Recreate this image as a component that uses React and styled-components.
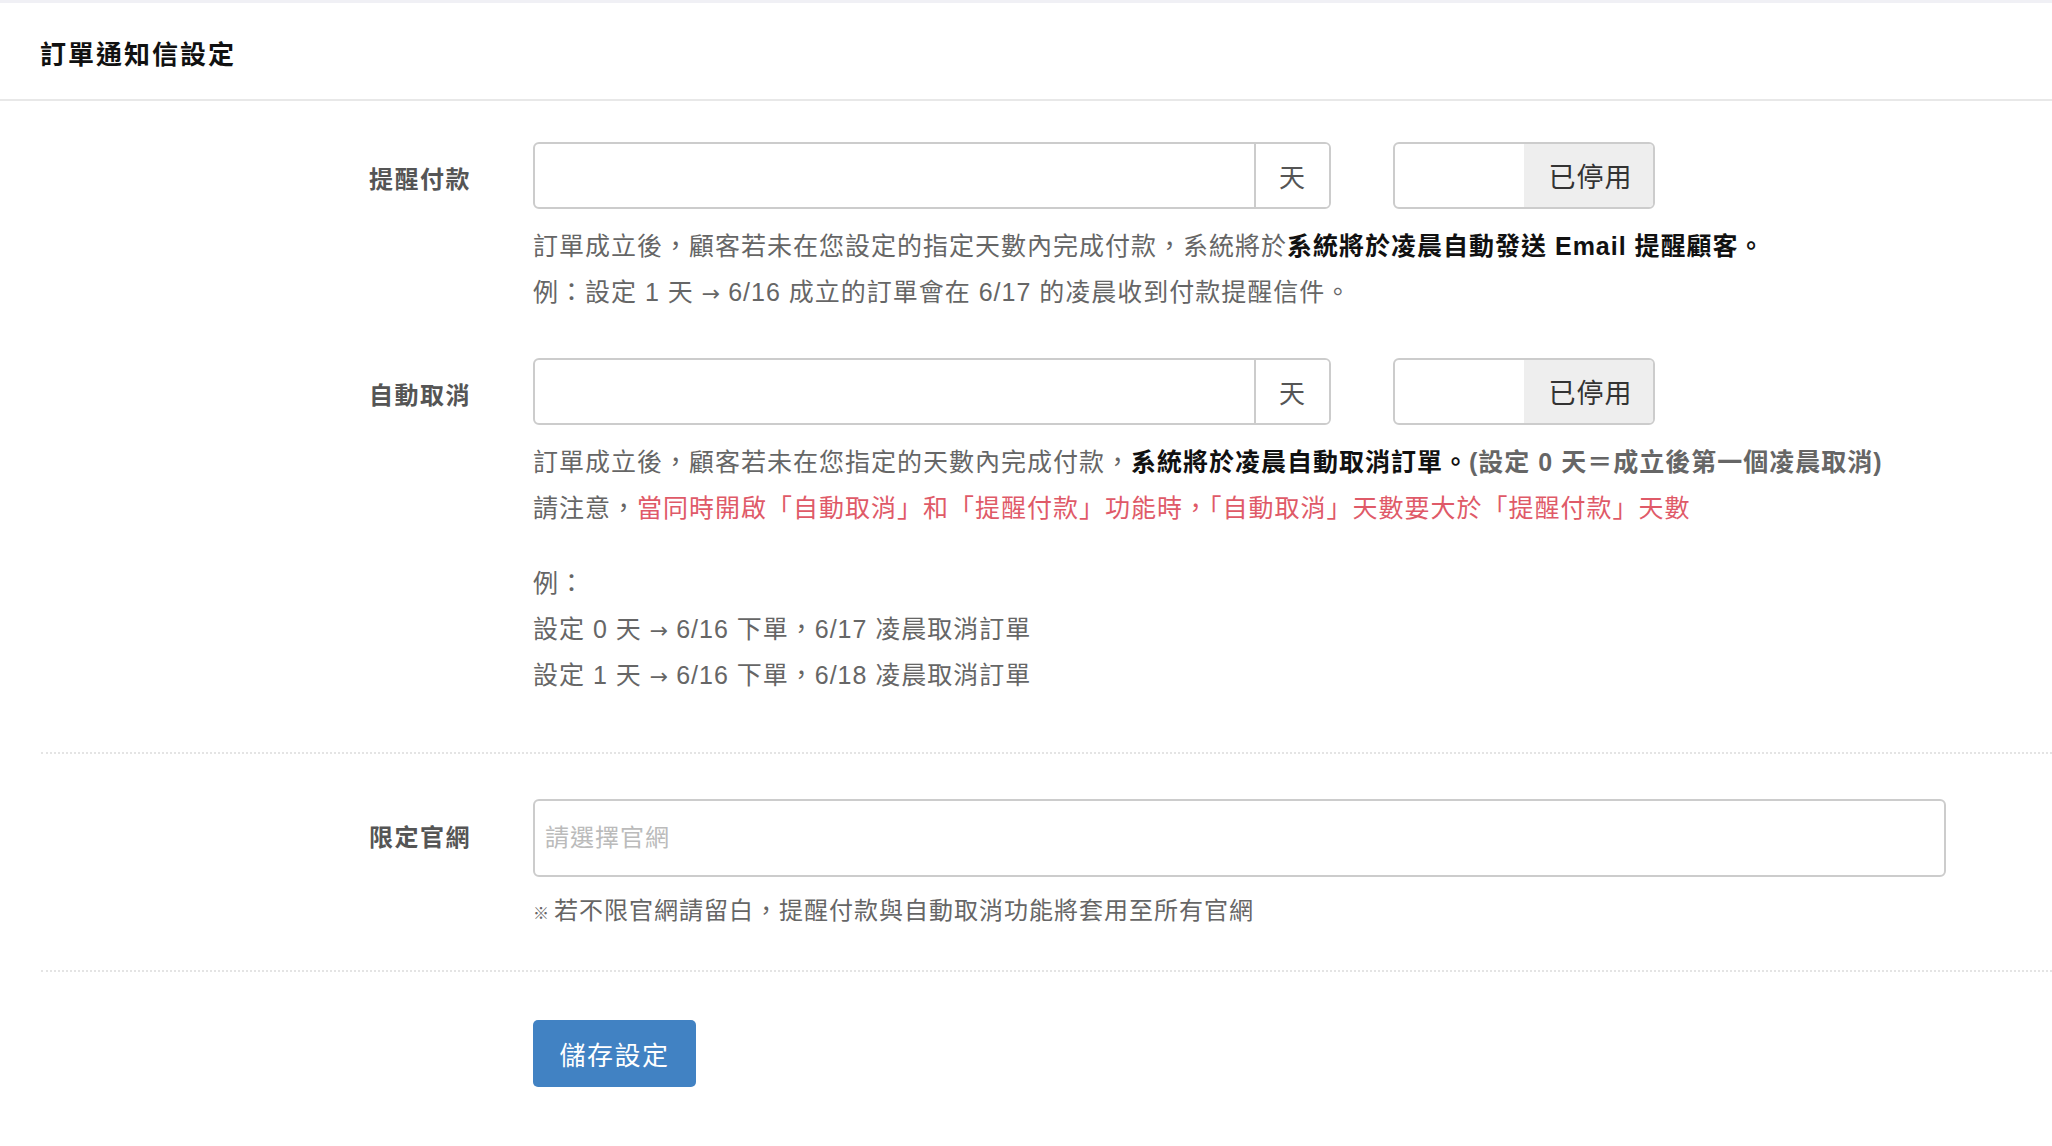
import React from 'react';
import styled, { createGlobalStyle } from 'styled-components';

const GlobalStyle = createGlobalStyle`
  body {
    margin: 0;
    background: #fff;
    font-family: "Liberation Sans", "Noto Sans CJK TC", sans-serif;
    color: #666;
  }
`;

const Page = styled.div`
  min-height: 1146px;
  background: #fff;
`;

const TopStrip = styled.div`
  height: 3px;
  background: #f0f0f5;
`;

const Header = styled.header`
  height: 98px;
  display: flex;
  align-items: center;
  padding: 2px 0 0 40px;
  box-sizing: border-box;
  border-bottom: 2px solid #e8e8e8;
`;

const Title = styled.h1`
  margin: 0;
  font-size: 26px;
  letter-spacing: 2px;
  font-weight: 700;
  color: #111;
`;

const Form = styled.form`
  margin-left: 41px;
  padding-top: 41px;
`;

const FieldRow = styled.div`
  display: grid;
  grid-template-columns: 430px auto;
  column-gap: 62px;
  align-items: start;
  margin-top: ${(p) => p.$top || 0}px;
`;

const Label = styled.div`
  height: ${(p) => p.$h || 67}px;
  padding-top: ${(p) => p.$pad ?? 4}px;
  box-sizing: border-box;
  display: flex;
  align-items: center;
  justify-content: flex-end;
  font-size: 24px;
  letter-spacing: 1.5px;
  font-weight: 700;
  color: #555;
`;

const Controls = styled.div`
  display: flex;
  gap: 62px;
`;

const InputGroup = styled.div`
  display: flex;
  width: ${(p) => p.$w}px;
  height: 67px;
  box-sizing: border-box;
  border: 2px solid #ccc;
  border-radius: 6px;
  overflow: hidden;
  background: #fff;
`;

const Field = styled.input`
  flex: 1;
  min-width: 0;
  border: none;
  outline: none;
  padding: 0 14px;
  font: inherit;
  font-size: 24px;
  background: transparent;
`;

const Addon = styled.span`
  width: ${(p) => p.$w}px;
  flex: none;
  display: flex;
  align-items: center;
  justify-content: center;
  font-size: ${(p) => (p.$muted ? 27 : 26)}px;
  letter-spacing: 1px;
  padding-left: ${(p) => (p.$muted ? 4 : 0)}px;
  box-sizing: border-box;
  color: ${(p) => (p.$muted ? '#333' : '#555')};
  background: ${(p) => (p.$muted ? '#eee' : '#fff')};
  border-left: ${(p) => (p.$muted ? 'none' : '2px solid #ccc')};
`;

const Help = styled.div`
  margin-top: ${(p) => p.$top || 14}px;
  font-size: 25px;
  line-height: 46px;
  letter-spacing: 1px;
  color: #666;
`;

const Line = styled.div`
  height: 46px;
  white-space: nowrap;
`;

const Strong = styled.b`
  font-weight: 700;
  color: ${(p) => (p.$grey ? '#666' : '#111')};
`;

const Warn = styled.span`
  color: #df5a68;
`;

const Arrow = styled.span`
  font-family: "DejaVu Sans", sans-serif;
  font-size: 22px;
  line-height: 1;
  letter-spacing: 0;
`;

const Divider = styled.hr`
  margin: ${(p) => p.$top}px 0 0;
  border: none;
  border-top: 2px dotted #e4e4e4;
  height: 0;
`;

const Select = styled.input`
  width: 1413px;
  height: 78px;
  box-sizing: border-box;
  border: 2px solid #ccc;
  border-radius: 6px;
  padding: 0 10px;
  outline: none;
  font: inherit;
  font-size: 24px;
  letter-spacing: 1px;
  color: #555;
  &::placeholder {
    color: #bbb;
  }
`;

const Note = styled.div`
  margin-top: 11px;
  font-size: 24px;
  line-height: 46px;
  letter-spacing: 1px;
  color: #666;
`;

const Mark = styled.span`
  font-size: 16px;
  margin-right: 4px;
`;

const SaveButton = styled.button`
  width: 163px;
  height: 67px;
  border: none;
  border-radius: 5px;
  background: #4182c3;
  color: #fff;
  font: inherit;
  font-size: 26px;
  letter-spacing: 1.5px;
  cursor: pointer;
`;

const Arr = () => <Arrow>→</Arrow>;

export default function App() {
  return (
    <Page>
      <GlobalStyle />
      <TopStrip />
      <Header>
        <Title>訂單通知信設定</Title>
      </Header>
      <Form onSubmit={(e) => e.preventDefault()}>
        <FieldRow>
          <Label>提醒付款</Label>
          <div>
            <Controls>
              <InputGroup $w={798}>
                <Field type="text" />
                <Addon $w={75}>天</Addon>
              </InputGroup>
              <InputGroup $w={262}>
                <Field type="text" />
                <Addon $w={129} $muted>已停用</Addon>
              </InputGroup>
            </Controls>
            <Help>
              <Line>
                訂單成立後，顧客若未在您設定的指定天數內完成付款，系統將於
                <Strong>系統將於凌晨自動發送 Email 提醒顧客。</Strong>
              </Line>
              <Line>例：設定 1 天 <Arr /> 6/16 成立的訂單會在 6/17 的凌晨收到付款提醒信件。</Line>
            </Help>
          </div>
        </FieldRow>

        <FieldRow $top={43}>
          <Label>自動取消</Label>
          <div>
            <Controls>
              <InputGroup $w={798}>
                <Field type="text" />
                <Addon $w={75}>天</Addon>
              </InputGroup>
              <InputGroup $w={262}>
                <Field type="text" />
                <Addon $w={129} $muted>已停用</Addon>
              </InputGroup>
            </Controls>
            <Help>
              <Line>
                訂單成立後，顧客若未在您指定的天數內完成付款，
                <Strong>系統將於凌晨自動取消訂單。</Strong>
                <Strong $grey>(設定 0 天＝成立後第一個凌晨取消)</Strong>
              </Line>
              <Line>
                請注意，
                <Warn>當同時開啟「自動取消」和「提醒付款」功能時，「自動取消」天數要大於「提醒付款」天數</Warn>
              </Line>
            </Help>
            <Help $top={29}>
              <Line>例：</Line>
              <Line>設定 0 天 <Arr /> 6/16 下單，6/17 凌晨取消訂單</Line>
              <Line>設定 1 天 <Arr /> 6/16 下單，6/18 凌晨取消訂單</Line>
            </Help>
          </div>
        </FieldRow>

        <Divider $top={54} />

        <FieldRow $top={45}>
          <Label $h={72} $pad={0}>限定官網</Label>
          <div>
            <Select type="text" placeholder="請選擇官網" />
            <Note>
              <Mark>※</Mark>若不限官網請留白，提醒付款與自動取消功能將套用至所有官網
            </Note>
          </div>
        </FieldRow>

        <Divider $top={33} />

        <FieldRow $top={48}>
          <Label />
          <div>
            <SaveButton type="submit">儲存設定</SaveButton>
          </div>
        </FieldRow>
      </Form>
    </Page>
  );
}
